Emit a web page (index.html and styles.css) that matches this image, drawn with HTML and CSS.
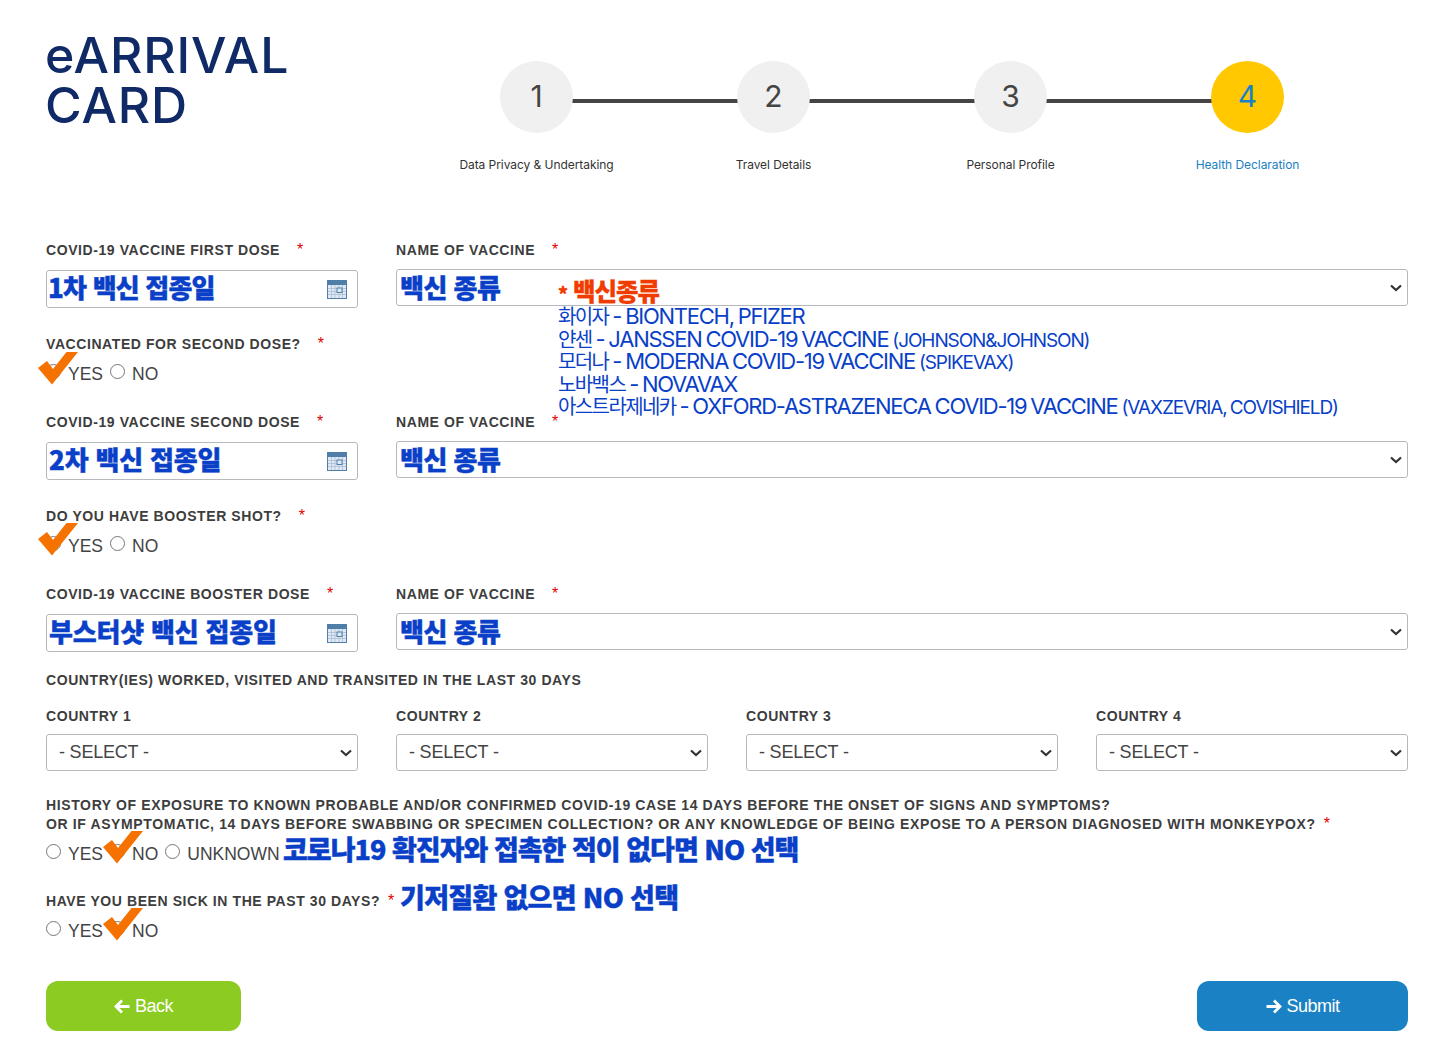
FILE: index.html
```html
<!DOCTYPE html>
<html lang="ko">
<head>
<meta charset="utf-8">
<title>eArrival Card</title>
<link rel="stylesheet" href="styles.css">
</head>
<body>
<svg class="defs" width="0" height="0" aria-hidden="true">
  <symbol id="cal" viewBox="0 0 20 19">
    <rect width="20" height="19" fill="#4f7fa8"/>
    <rect x="1" y="5" width="18" height="13" fill="#dfe8f3"/>
    <path d="M1 8.5h18M1 11.500h18M1 14.500h18M4.500 5v13M8 5v13M12 5v13M15.500 5v13" stroke="#b3c6dc" stroke-width="1" fill="none"/>
    <rect x="10" y="8" width="5" height="4.500" fill="#dfe8f3" stroke="#4f7fa8"/>
  </symbol>
  <symbol id="tick" viewBox="0 0 40 33">
    <polygon points="0,16 9,9 15,17 28.500,0 40,0 14,32.500" fill="#f57200"/>
  </symbol>
  <symbol id="arrow" viewBox="0 0 17 15">
    <path d="M1.500 7.500h13M9 1.500l6 6-6 6" fill="none" stroke="currentColor" stroke-width="2.800"/>
  </symbol>
</svg>
<main class="page">
  <header class="top">
    <h1 class="logo">eARRIVAL<br>CARD</h1>
    <ol class="steps">
      <li class="step"><span class="dot">1</span><span class="cap">Data Privacy &amp; Undertaking</span></li>
      <li class="step"><span class="dot">2</span><span class="cap">Travel Details</span></li>
      <li class="step"><span class="dot">3</span><span class="cap">Personal Profile</span></li>
      <li class="step current"><span class="dot">4</span><span class="cap">Health Declaration</span></li>
    </ol>
  </header>

  <form class="form">
    <div class="grid">
      <div class="field">
        <label class="lbl">COVID-19 VACCINE FIRST DOSE<i class="req">*</i></label>
        <div class="date"><svg class="cal"><use href="#cal"/></svg></div>
      </div>
      <div class="field wide">
        <label class="lbl">NAME OF VACCINE<i class="req">*</i></label>
        <select class="sel"><option></option></select>
      </div>
    </div>
    <div class="q q-a">
      <label class="lbl">VACCINATED FOR SECOND DOSE?<i class="req">*</i></label>
      <div class="radios"><input type="radio" name="r1"><span>YES</span><input type="radio" name="r1"><span>NO</span></div>
    </div>
    <div class="grid g-b">
      <div class="field">
        <label class="lbl">COVID-19 VACCINE SECOND DOSE<i class="req">*</i></label>
        <div class="date"><svg class="cal"><use href="#cal"/></svg></div>
      </div>
      <div class="field wide">
        <label class="lbl">NAME OF VACCINE<i class="req">*</i></label>
        <select class="sel"><option></option></select>
      </div>
    </div>
    <div class="q q-a">
      <label class="lbl">DO YOU HAVE BOOSTER SHOT?<i class="req">*</i></label>
      <div class="radios"><input type="radio" name="r2"><span>YES</span><input type="radio" name="r2"><span>NO</span></div>
    </div>
    <div class="grid g-b">
      <div class="field">
        <label class="lbl">COVID-19 VACCINE BOOSTER DOSE<i class="req">*</i></label>
        <div class="date"><svg class="cal"><use href="#cal"/></svg></div>
      </div>
      <div class="field wide">
        <label class="lbl">NAME OF VACCINE<i class="req">*</i></label>
        <select class="sel"><option></option></select>
      </div>
    </div>
    <p class="lbl sub">COUNTRY(IES) WORKED, VISITED AND TRANSITED IN THE LAST 30 DAYS</p>
    <div class="grid g-c">
      <div class="field tight"><label class="lbl">COUNTRY 1</label><select class="sel"><option>- SELECT -</option></select></div>
      <div class="field tight"><label class="lbl">COUNTRY 2</label><select class="sel"><option>- SELECT -</option></select></div>
      <div class="field tight"><label class="lbl">COUNTRY 3</label><select class="sel"><option>- SELECT -</option></select></div>
      <div class="field tight"><label class="lbl">COUNTRY 4</label><select class="sel"><option>- SELECT -</option></select></div>
    </div>
    <div class="q q-h">
      <label class="lbl multi">HISTORY OF EXPOSURE TO KNOWN PROBABLE AND/OR CONFIRMED COVID-19 CASE 14 DAYS BEFORE THE ONSET OF SIGNS AND SYMPTOMS?<br>OR IF ASYMPTOMATIC, 14 DAYS BEFORE SWABBING OR SPECIMEN COLLECTION? OR ANY KNOWLEDGE OF BEING EXPOSE TO A PERSON DIAGNOSED WITH MONKEYPOX?<i class="req near">*</i></label>
      <div class="radios r-h"><input type="radio" name="r3"><span>YES</span><input type="radio" name="r3"><span>NO</span><input type="radio" name="r3"><span>UNKNOWN</span></div>
    </div>
    <div class="q q-s">
      <label class="lbl">HAVE YOU BEEN SICK IN THE PAST 30 DAYS?<i class="req near">*</i></label>
      <div class="radios r-s"><input type="radio" name="r4"><span>YES</span><input type="radio" name="r4"><span>NO</span></div>
    </div>
    <div class="actions">
      <button type="button" class="btn back"><svg class="arr flip"><use href="#arrow"/></svg>Back</button>
      <button type="button" class="btn submit"><svg class="arr"><use href="#arrow"/></svg>Submit</button>
    </div>
  </form>

  <span class="note n1">1차 백신 접종일</span>
  <span class="note n2">백신 종류</span>
  <span class="note n3">2차 백신 접종일</span>
  <span class="note n4">백신 종류</span>
  <span class="note n5">부스터샷 백신 접종일</span>
  <span class="note n6">백신 종류</span>
  <span class="note n7">코로나19 확진자와 접촉한 적이 없다면 NO 선택</span>
  <span class="note n8">기저질환 없으면 NO 선택</span>
  <div class="list">
    <div class="list-h"><b>*</b> 백신종류</div>
    <div class="li"><span class="ko">화이자</span> - BIONTECH, PFIZER</div>
    <div class="li"><span class="ko">얀센</span> - JANSSEN COVID-19 VACCINE <small>(JOHNSON&amp;JOHNSON)</small></div>
    <div class="li"><span class="ko">모더나</span> - MODERNA COVID-19 VACCINE <small>(SPIKEVAX)</small></div>
    <div class="li"><span class="ko">노바백스</span> - NOVAVAX</div>
    <div class="li"><span class="ko">아스트라제네카</span> - OXFORD-ASTRAZENECA COVID-19 VACCINE <small>(VAXZEVRIA, COVISHIELD)</small></div>
  </div>
  <svg class="tick t1"><use href="#tick"/></svg>
  <svg class="tick t2"><use href="#tick"/></svg>
  <svg class="tick t3"><use href="#tick"/></svg>
  <svg class="tick t4"><use href="#tick"/></svg>
</main>
</body>
</html>
```

FILE: styles.css
```css
* { box-sizing: border-box; }
html, body { margin: 0; background: #fff; }
body { font-family: "Liberation Sans", Arial, sans-serif; color: #333; }
.defs { position: absolute; }
.page { position: relative; width: 1450px; height: 1050px; padding: 0 42px 0 46px; overflow: hidden; }

.top { display: flex; height: 240px; }
.logo { margin: 30px 0 0 -1px; width: 373px; font-family: Inter, sans-serif; font-weight: 500; font-size: 50px; line-height: 50px; letter-spacing: 0.9px; color: #0f2a66; }
.steps { display: flex; list-style: none; margin: 61px 0 0; padding: 0; width: 948px; align-self: flex-start; }
.step { position: relative; flex: 1; display: flex; flex-direction: column; align-items: center; }
.step:not(:last-child)::after { content: ""; position: absolute; left: calc(50% + 35px); width: calc(100% - 71px); top: 38px; height: 4px; background: #444; }
.dot { position: relative; z-index: 1; width: 73px; height: 72px; padding-bottom: 2px; border-radius: 50%; background: #f0f0f0; color: #444; font-family: Inter, sans-serif; font-size: 30px; display: flex; align-items: center; justify-content: center; }
.cap { margin-top: 24px; font-family: Inter, sans-serif; font-size: 12px; line-height: 16px; letter-spacing: -0.06px; color: #333; }
.current .dot { background: #ffc800; color: #1a82c4; }
.current .cap { color: #1a7fc4; }

.grid { display: grid; grid-template-columns: repeat(4, 312px); column-gap: 38px; }
.wide { grid-column: span 3; }
.g-b { margin-top: 22px; }
.g-c { margin-top: 16px; }
.lbl { display: block; margin: 0; font-size: 14px; line-height: 20px; font-weight: 700; color: #3d3d3d; letter-spacing: 0.58px; }
.req { font-style: normal; font-size: 16px; color: #e00000; margin-left: 17px; position: relative; top: 0; line-height: 0; font-weight: 400; letter-spacing: 0; }
.req.near { margin-left: 8px; }
.field .lbl { margin-bottom: 10px; }
.field.wide .lbl { margin-bottom: 9px; }
.field.tight .lbl { margin-bottom: 8px; }
.date { position: relative; height: 38px; border: 1px solid #b5b9bd; border-radius: 3px; background: #fff; display: flex; align-items: center; justify-content: flex-end; padding-right: 10px; }
.cal { width: 20px; height: 19px; }
.sel { display: block; width: 100%; height: 37px; padding: 0 12px 2px; border: 1px solid #b5b9bd; border-radius: 3px; font: 18px "Liberation Sans", Arial, sans-serif; letter-spacing: -0.2px; color: #444; appearance: none; background: #fff url("data:image/svg+xml,%3Csvg xmlns='http://www.w3.org/2000/svg' width='12' height='8' viewBox='0 0 12 8'%3E%3Cpath d='M1 1.500l5 4.500 5-4.500' fill='none' stroke='%23333' stroke-width='2.200'/%3E%3C/svg%3E") no-repeat right 5px center; }
.q-a { margin-top: 26px; }
.q-h { margin-top: 25px; }
.q-s { margin-top: 21px; }
.radios { display: flex; align-items: center; height: 36px; font-size: 17.500px; color: #444; }
.radios input { width: 15px; height: 15px; margin: 0 7px 2px 0; accent-color: #555; }
.radios span { margin-right: 7px; margin-top: 4px; }
.r-h { height: 36px; }
.r-h span { margin-top: 5px; }
.r-s { height: 36px; }
.multi { line-height: 19px; letter-spacing: 0.62px; }
.sub { margin-top: 18px; }
.actions { display: flex; justify-content: space-between; margin-top: 34px; }
.btn { display: flex; align-items: center; justify-content: center; height: 50px; border: 0; border-radius: 12px; color: #fff; font: 18px "Liberation Sans", Arial, sans-serif; letter-spacing: -0.5px; }
.back { width: 195px; background: #8ccb22; }
.submit { width: 211px; background: #1a82c4; }
.arr { width: 17px; height: 15px; margin-right: 4px; }
.flip { transform: scaleX(-1); }

.note { position: absolute; font-family: "Noto Sans CJK KR", sans-serif; font-weight: 900; font-size: 26px; line-height: 32px; letter-spacing: -0.5px; color: #0a3fc8; white-space: nowrap; -webkit-text-stroke: 0.4px #0a3fc8; }
.n1 { left: 48px; top: 271px; letter-spacing: -0.8px; }
.n2 { left: 400px; top: 271px; }
.n3 { left: 49px; top: 443px; letter-spacing: -0.2px; }
.n4 { left: 400px; top: 443px; }
.n5 { left: 49px; top: 615px; letter-spacing: -0.2px; }
.n6 { left: 400px; top: 615px; }
.n7 { left: 283px; top: 833px; font-size: 27px; letter-spacing: -1px; }
.n8 { left: 400px; top: 881px; font-size: 27px; letter-spacing: -0.7px; }
.list { position: absolute; left: 558px; top: 278px; font-family: Inter, "Noto Sans CJK KR", sans-serif; font-size: 22px; letter-spacing: -1.25px; word-spacing: -1px; color: #0a3fc8; white-space: nowrap; }
.li { height: 22.500px; line-height: 22.500px; }
.ko { font-family: "Noto Sans CJK KR", sans-serif; font-size: 20px; letter-spacing: -1.6px; line-height: 0; }
.list small { font-size: 19px; letter-spacing: -1.1px; line-height: 0; }
.list-h { font-family: "Noto Sans CJK KR", sans-serif; font-weight: 900; font-size: 24.500px; line-height: 28px; margin-top: -1px; height: 28px; color: #f03c00; letter-spacing: -1px; word-spacing: 0; -webkit-text-stroke: 0.3px #f03c00; }
.list-h b { font-size: 19px; font-weight: 900; }
.tick { position: absolute; width: 40px; height: 33px; }
.t1 { left: 38px; top: 352px; }
.t2 { left: 38px; top: 523px; }
.t3 { left: 103px; top: 831px; }
.t4 { left: 103px; top: 908px; }
```
